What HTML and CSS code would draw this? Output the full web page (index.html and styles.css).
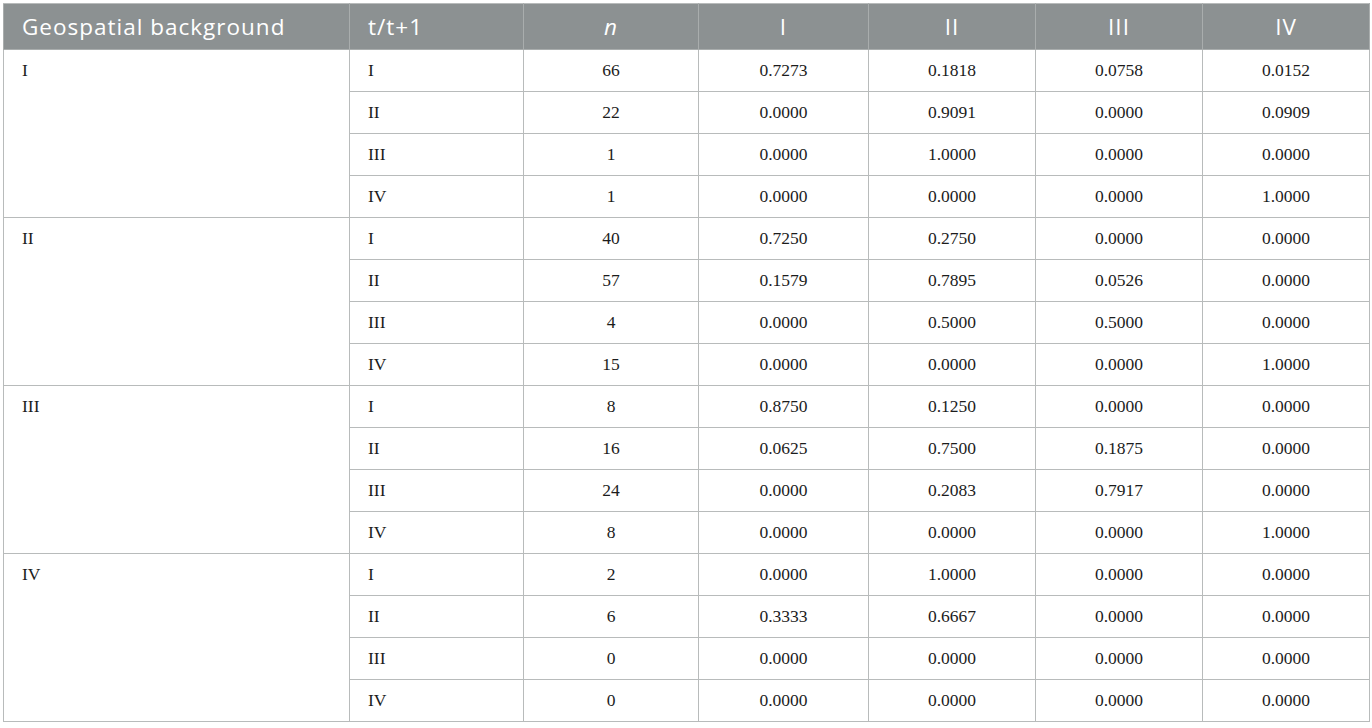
FILE: index.html
```html
<!DOCTYPE html>
<html>
<head>
<meta charset="utf-8">
<link rel="stylesheet" href="styles.css">
</head>
<body>
<table class="data">
<colgroup>
<col class="c1"><col class="c2"><col class="c3"><col class="c4"><col class="c5"><col class="c6"><col class="c7">
</colgroup>
<thead>
<tr><th class="left">Geospatial background</th><th class="left">t/t+1</th><th><i>n</i></th><th>I</th><th>II</th><th>III</th><th>IV</th></tr>
</thead>
<tbody>
<tr><td rowspan="4" class="group">I</td><td class="left">I</td><td>66</td><td>0.7273</td><td>0.1818</td><td>0.0758</td><td>0.0152</td></tr>
<tr><td class="left">II</td><td>22</td><td>0.0000</td><td>0.9091</td><td>0.0000</td><td>0.0909</td></tr>
<tr><td class="left">III</td><td>1</td><td>0.0000</td><td>1.0000</td><td>0.0000</td><td>0.0000</td></tr>
<tr><td class="left">IV</td><td>1</td><td>0.0000</td><td>0.0000</td><td>0.0000</td><td>1.0000</td></tr>
<tr><td rowspan="4" class="group">II</td><td class="left">I</td><td>40</td><td>0.7250</td><td>0.2750</td><td>0.0000</td><td>0.0000</td></tr>
<tr><td class="left">II</td><td>57</td><td>0.1579</td><td>0.7895</td><td>0.0526</td><td>0.0000</td></tr>
<tr><td class="left">III</td><td>4</td><td>0.0000</td><td>0.5000</td><td>0.5000</td><td>0.0000</td></tr>
<tr><td class="left">IV</td><td>15</td><td>0.0000</td><td>0.0000</td><td>0.0000</td><td>1.0000</td></tr>
<tr><td rowspan="4" class="group">III</td><td class="left">I</td><td>8</td><td>0.8750</td><td>0.1250</td><td>0.0000</td><td>0.0000</td></tr>
<tr><td class="left">II</td><td>16</td><td>0.0625</td><td>0.7500</td><td>0.1875</td><td>0.0000</td></tr>
<tr><td class="left">III</td><td>24</td><td>0.0000</td><td>0.2083</td><td>0.7917</td><td>0.0000</td></tr>
<tr><td class="left">IV</td><td>8</td><td>0.0000</td><td>0.0000</td><td>0.0000</td><td>1.0000</td></tr>
<tr><td rowspan="4" class="group">IV</td><td class="left">I</td><td>2</td><td>0.0000</td><td>1.0000</td><td>0.0000</td><td>0.0000</td></tr>
<tr><td class="left">II</td><td>6</td><td>0.3333</td><td>0.6667</td><td>0.0000</td><td>0.0000</td></tr>
<tr><td class="left">III</td><td>0</td><td>0.0000</td><td>0.0000</td><td>0.0000</td><td>0.0000</td></tr>
<tr><td class="left">IV</td><td>0</td><td>0.0000</td><td>0.0000</td><td>0.0000</td><td>0.0000</td></tr>
</tbody>
</table>
</body>
</html>
```
FILE: styles.css
```css
html, body {
  margin: 0;
  padding: 0;
  background: #ffffff;
}
body {
  padding: 3px 0 0 3px;
}
.data {
  border-collapse: collapse;
  table-layout: fixed;
  width: 1366px;
  font-family: "Liberation Serif", "Times New Roman", serif;
  font-size: 17.5px;
  color: #1c1c1c;
}
.c1 { width: 346px; }
.c2 { width: 174px; }
.c3 { width: 175px; }
.c4 { width: 170px; }
.c5 { width: 167px; }
.c6 { width: 167px; }
.c7 { width: 167px; }
.data th,
.data td {
  border: 1px solid #b8bbbb;
  text-align: center;
  padding: 0 18px;
}
.data th {
  background: #8c9192;
  color: #ffffff;
  font-family: "Open Sans", "Liberation Sans", sans-serif;
  font-weight: 400;
  font-size: 22.5px;
  letter-spacing: 1px;
  height: 45px;
  border-color: #a9adad;
  border-top-color: #b8bbbb;
}
.data td {
  height: 41px;
  vertical-align: middle;
}
.data .left {
  text-align: left;
}
.data td.group {
  text-align: left;
  vertical-align: top;
  padding-top: 10px;
  line-height: 21px;
}
```
